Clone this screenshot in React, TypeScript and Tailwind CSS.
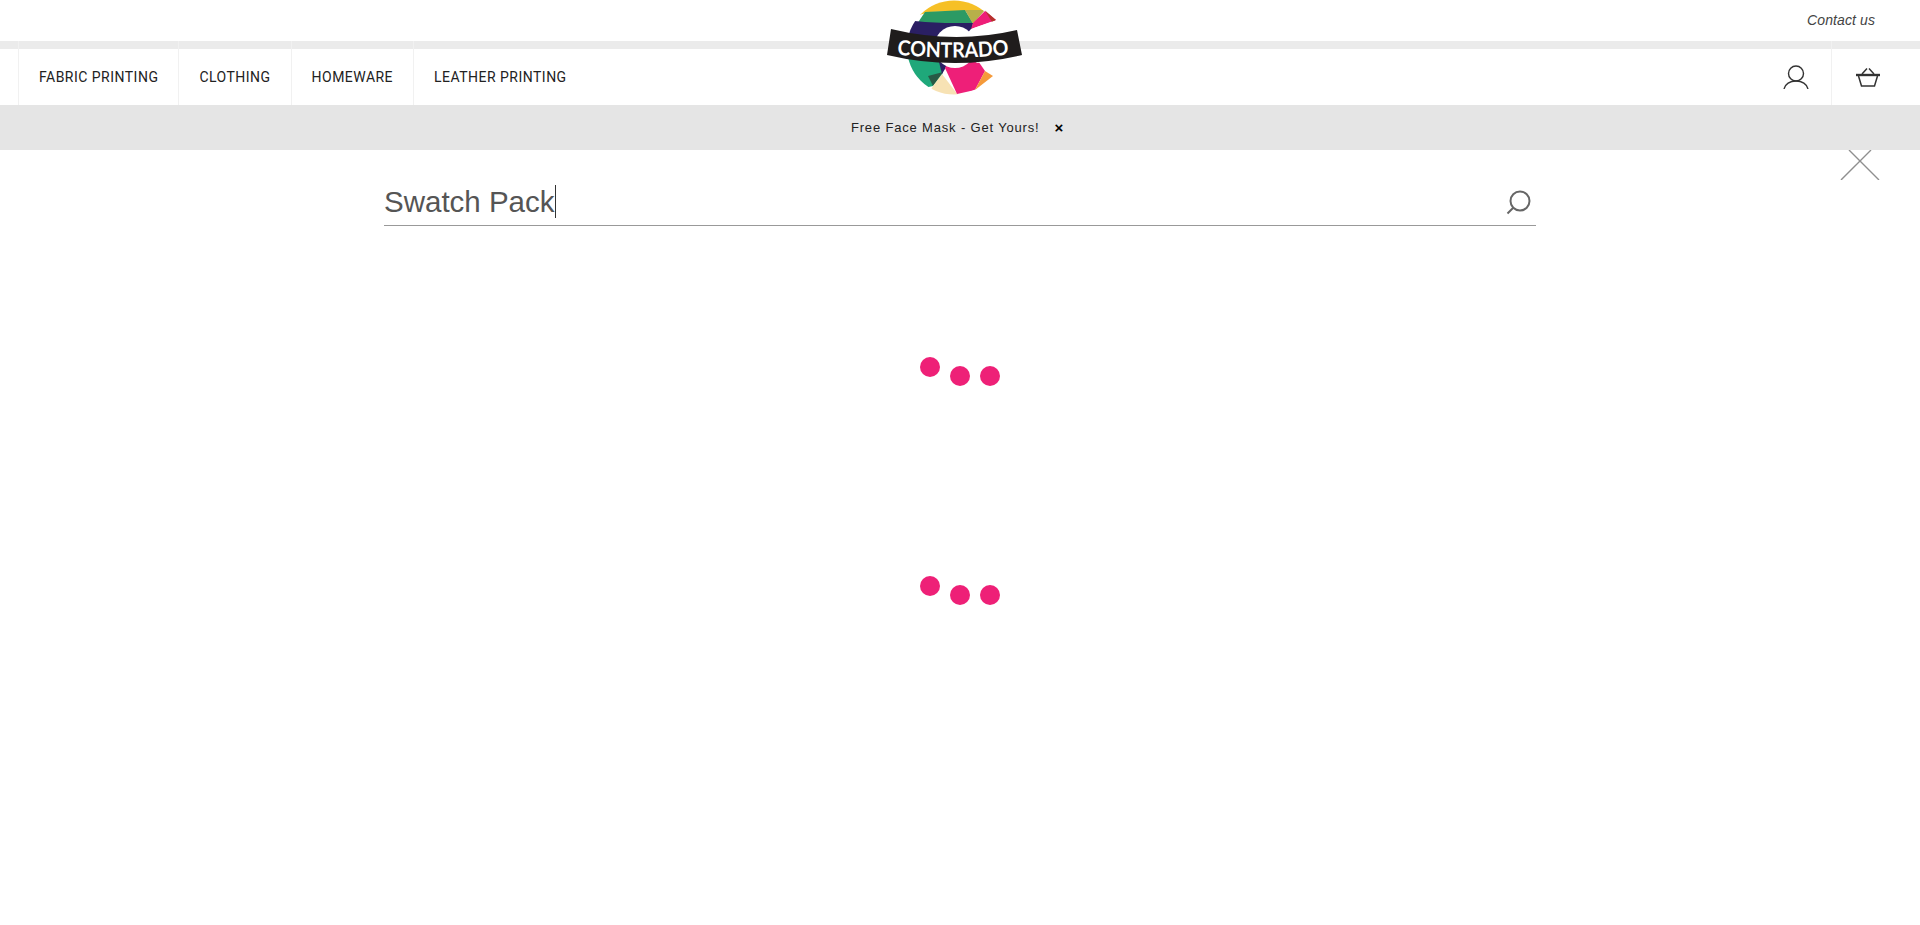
import React from "react";

function Logo() {
  return (
    <svg width="140" height="96" viewBox="885 0 140 96" className="block">
      <defs>
        <clipPath id="disc"><circle cx="954" cy="47.500" r="47" /></clipPath>
        <path id="arc" d="M891 54Q953 61 1015 54" />
      </defs>
      <g clipPath="url(#disc)">
        <path d="M900 0H1000V20L985 11H965L930 12L900 20Z" fill="#f6c026" />
        <path d="M925 12L965 10L973 23L945 25L915 27Z" fill="#2c9a64" />
        <path d="M965 10L985 10L973 24Z" fill="#b7b04a" />
        <path d="M905 40V20L925 22L945 23L973 23L972 30L960 40Z" fill="#2a1f63" />
        <path d="M900 58L945 60L942 75L933 86L915 90L900 80Z" fill="#1fa87a" />
        <path d="M928 76L943 72L933 86Z" fill="#285a45" />
        <path d="M938 58L950 58L945 69L942 74Z" fill="#2a1f63" />
        <path d="M933 86L942 74L958 95L950 100L925 100Z" fill="#f7e2b4" />
        <path d="M945 68L950 58L976 58L985 71L975 90L957 94Z" fill="#ee1f78" />
      </g>
      <path d="M973 23L985 11L996 20L971 29Z" fill="#ee1f78" />
      <path d="M985 10.500L996 20L992 22Z" fill="#b5322b" />
      <path d="M985 71L993 76L975 90Z" fill="#f59a3a" />
      <circle cx="955" cy="47" r="21" fill="#fff" />
      <path d="M955 47L971 29L996 20.500L1000 60L977 63Z" fill="#fff" />
      <path d="M891 29Q955 44.500 1017 30L1022 55Q955 71 887 55Z" fill="#1f1c1c" />
      <text fill="#fff" className="font-['Lato',sans-serif]" fontWeight="700" fontSize="21" textAnchor="middle" textLength="112" lengthAdjust="spacingAndGlyphs">
        <textPath href="#arc" startOffset="50%">CONTRADO</textPath>
      </text>
    </svg>
  );
}

function Dots() {
  return (
    <div className="flex h-[30px] items-start justify-center gap-[10px]">
      <span className="h-5 w-5 rounded-full bg-[#ee2077]" />
      <span className="mt-[9px] h-5 w-5 rounded-full bg-[#ee2077]" />
      <span className="mt-[9px] h-5 w-5 rounded-full bg-[#ee2077]" />
    </div>
  );
}

const nav = ["FABRIC PRINTING", "CLOTHING", "HOMEWARE", "LEATHER PRINTING"];

export default function App() {
  return (
    <div className="relative h-[925px] overflow-hidden bg-white font-['Liberation_Sans',sans-serif]">
      <header className="relative">
        <div className="flex h-[41px] items-center justify-end pr-[45px] text-[14px] italic tracking-[0.1px] text-[#444]">Contact us</div>
        <div className="h-2 bg-[#ebebeb]" />
        <div className="flex h-14 items-stretch justify-between pl-[18px]">
          <nav className="-mt-2 flex items-stretch">
            {nav.map((n) => (
              <a key={n} className="flex items-center border-l border-[#f1f1f1] px-[20px] pt-2 font-['Roboto',sans-serif] text-[14px] tracking-[0.48px] text-[#222]">{n}</a>
            ))}
          </nav>
          <div className="-mt-2 flex items-stretch">
            <div className="flex w-[72px] items-center justify-center pl-[1px] pt-2">
              <svg width="26" height="24" viewBox="0 0 26 24" fill="none" stroke="#333" strokeWidth="1.400">
                <circle cx="13" cy="8.500" r="7.500" />
                <path d="M1 24c1-5 6-8 12-8s11 3 12 8" />
              </svg>
            </div>
            <div className="flex w-[89px] items-center border-l border-[#f1f1f1] pl-[24px] pt-2">
              <svg width="24" height="19" viewBox="0 0 24 19" fill="none" stroke="#333" strokeWidth="1.500">
                <path d="M0 7H24" strokeWidth="2.400" />
                <path d="M2.500 8l3 10H18.500l3-10" />
                <path d="M6 6l5-5.500M18 6l-5-5.500" />
              </svg>
            </div>
          </div>
        </div>
        <div className="absolute left-[885px] top-0"><Logo /></div>
      </header>

      <div className="flex h-[45px] items-center justify-center bg-[#e5e5e5] pr-[5px] text-[13px] tracking-[0.83px] text-[#222]">
        <span>Free Face Mask - Get Yours!</span>
        <span className="ml-[15px] text-[15px] font-bold leading-none text-black">×</span>
      </div>

      <button className="absolute left-[1840px] top-[150px] block">
        <svg width="40" height="30" viewBox="0 0 40 30" className="block" stroke="#8f8f8f" strokeWidth="1.400">
          <path d="M9 0L39 30M31 0L1 30" />
        </svg>
      </button>

      <main className="mx-auto w-[1152px] pt-[26px]">
        <div className="flex h-[50px] items-center justify-between border-b border-[#999]">
          <div className="flex items-center pt-[3px] text-[29.5px] leading-none text-[#555]">
            Swatch Pack<span className="-mt-[1px] h-[33px] w-px bg-[#333]" />
          </div>
          <svg width="26" height="26" viewBox="0 0 26 26" fill="none" stroke="#666" strokeWidth="2" className="mr-[5px] mt-[4px]">
            <circle cx="15" cy="11" r="9.500" />
            <path d="M8 18l-5.500 5.500" />
          </svg>
        </div>
        <div className="pt-[131px]"><Dots /></div>
        <div className="pt-[189px]"><Dots /></div>
      </main>
    </div>
  );
}
